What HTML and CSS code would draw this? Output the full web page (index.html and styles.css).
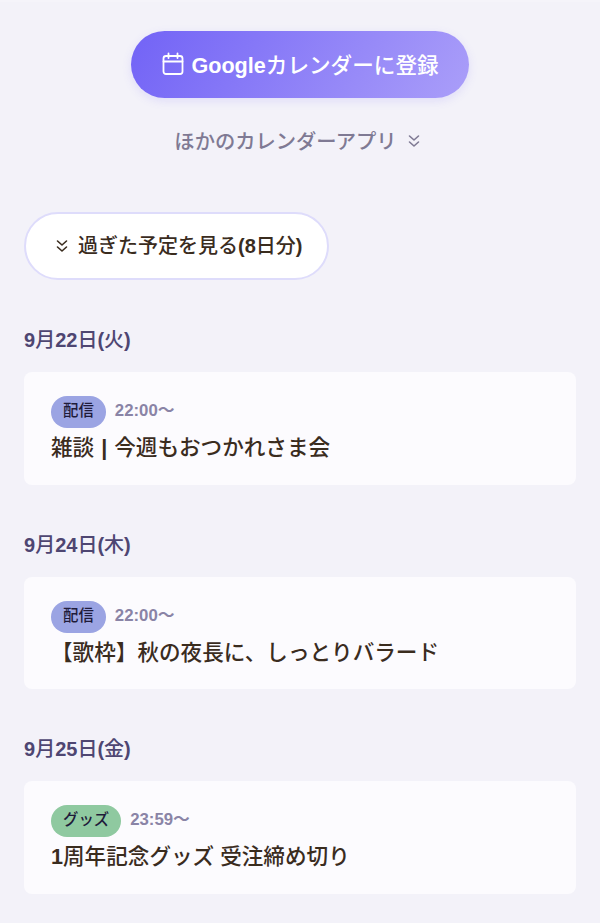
FILE: index.html
```html
<!doctype html>
<html lang="ja">
  <head>
    <meta charset="utf-8">
    <title>スケジュール</title>
    <link rel="stylesheet" href="styles.css">
  </head>
  <body>
    <div class="top-band"></div>
    <div class="calendar-links">
      <a class="google-btn">
        <svg class="cal-icon" viewBox="0 0 24 24" width="24" height="24" fill="none" stroke="currentColor" stroke-width="1.8" stroke-linecap="round" stroke-linejoin="round">
          <rect x="2.500" y="4" width="19" height="18" rx="2.500"/>
          <path d="M2.500 9.500h19M7.500 1.500v4.500M16.500 1.500v4.500"/>
        </svg>
        <span><b>Google</b>カレンダーに登録</span>
      </a>
      <a class="other-apps">
        <span class="other-label">ほかのカレンダーアプリ</span>
        <svg class="chev" viewBox="0 0 16 16" width="16" height="16" fill="none" stroke="currentColor" stroke-width="1.600" stroke-linecap="round" stroke-linejoin="round">
          <path d="M3.500 3 8 7l4.500-4M3.500 9 8 13l4.500-4"/>
        </svg>
      </a>
    </div>

    <a class="past-btn">
      <svg class="chev" viewBox="0 0 16 16" width="16" height="16" fill="none" stroke="currentColor" stroke-width="1.600" stroke-linecap="round" stroke-linejoin="round">
        <path d="M3.500 3 8 7l4.500-4M3.500 9 8 13l4.500-4"/>
      </svg>
      <span class="past-label">過ぎた予定を見る<b>(8</b>日分<b>)</b></span>
    </a>

    <section class="day">
      <h2 class="day-title"><b>9</b>月<b>22</b>日<b>(</b>火<b>)</b></h2>
      <div class="card">
        <div class="meta"><span class="tag tag-live">配信</span><span class="time">22:00〜</span></div>
        <div class="name">雑談<span class="sep">|</span>今週もおつかれさま会</div>
      </div>
    </section>

    <section class="day">
      <h2 class="day-title"><b>9</b>月<b>24</b>日<b>(</b>木<b>)</b></h2>
      <div class="card">
        <div class="meta"><span class="tag tag-live">配信</span><span class="time">22:00〜</span></div>
        <div class="name">【歌枠】秋の夜長に、しっとりバラード</div>
      </div>
    </section>

    <section class="day">
      <h2 class="day-title"><b>9</b>月<b>25</b>日<b>(</b>金<b>)</b></h2>
      <div class="card">
        <div class="meta"><span class="tag tag-goods">グッズ</span><span class="time">23:59〜</span></div>
        <div class="name"><b>1</b>周年記念グッズ 受注締め切り</div>
      </div>
    </section>
  </body>
</html>
```

FILE: styles.css
```css
html, body {margin: 0; padding: 0;}
body {
  height: 923px;
  overflow: hidden;
  background-color: #F3F2F9;
  font-family: "Liberation Sans", "Noto Sans CJK JP", sans-serif;
  color: #3A2C1E;
  font-weight: 500;
}
b {font-weight: bold;}
.top-band {height: 2px; background-color: #F5F4FA;}

.calendar-links {display: flex; flex-direction: column; align-items: center; padding-top: 29px;}
.google-btn {
  display: flex;
  align-items: center;
  justify-content: center;
  gap: 6px;
  box-sizing: border-box;
  width: 338px;
  height: 67px;
  padding-bottom: 2px;
  border-radius: 34px;
  background: linear-gradient(120deg, #7263F6, #AA9EF9);
  box-shadow: 0 3px 10px rgba(117, 102, 246, 0.15);
  color: #FFFFFF;
  font-size: 21.6px;
}
.other-apps {
  display: flex;
  align-items: center;
  gap: 9px;
  margin: 27px 4px 0 0;
  height: 32px;
  color: #7F7A94;
  font-size: 20.3px;
}
.other-label {padding-bottom: 2px;}

.past-btn {
  display: flex;
  align-items: center;
  gap: 8px;
  box-sizing: border-box;
  width: 305px;
  height: 68px;
  margin: 55px 0 0 24px;
  padding-left: 28px;
  border: 2px solid #DEDCFB;
  border-radius: 34px;
  background-color: #FFFFFF;
  font-size: 20px;
}
.past-label {padding-bottom: 3px;}

.day {padding: 0 24px;}
.day-title {
  margin: 44px 0 16px;
  height: 32px;
  line-height: 32px;
  color: #4E4672;
  font-size: 20px;
  font-weight: 500;
}
.card {
  box-sizing: border-box;
  height: 112.500px;
  padding: 24px 27px 0;
  border-radius: 8px;
  background-color: #FCFBFE;
}
.meta {display: flex; align-items: center; gap: 9px; height: 32px;}
.tag {
  padding: 0 12px;
  height: 32px;
  line-height: 30px;
  border-radius: 16px;
  color: #1F1B3A;
  font-size: 15.400px;
}
.tag-live {background-color: #9BA4E3;}
.tag-goods {background-color: #8FC9A0;}
.time {margin-bottom: 6px; color: #8A84A6; font-size: 16.800px; font-weight: bold;}
.name {margin-top: 3px; font-size: 21.600px; line-height: 34px; white-space: nowrap;}
.sep {display: inline-block; width: 20px; text-align: center; font-weight: bold;}
```
